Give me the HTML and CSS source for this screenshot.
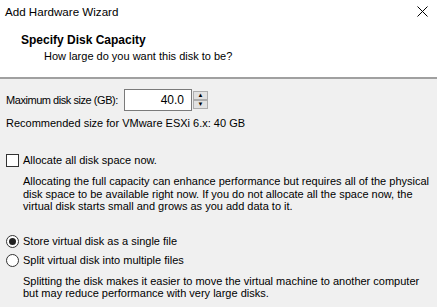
FILE: index.html
```html
<!DOCTYPE html>
<html lang="en">
<head>
    <meta charset="UTF-8">
    <title>Add Hardware Wizard</title>
    <link rel="stylesheet" href="styles.css">
</head>
<body>

<div class="titlebar">
    <span class="title">Add Hardware Wizard</span>
    <svg class="close" width="11" height="11" viewBox="0 0 11 11">
        <path d="M0.5 0.5 L10.5 10.5 M10.5 0.5 L0.5 10.5" stroke="#000" stroke-width="1" fill="none"/>
    </svg>
</div>

<div class="header">
    <div class="heading">Specify Disk Capacity</div>
    <div class="subheading">How large do you want this disk to be?</div>
</div>

<div class="content">
    <div class="size-row">
        <label>Maximum disk size (GB):</label>
        <div class="spin">
            <div class="spin-value">40.0</div>
            <div class="spin-buttons">
                <div class="spin-btn">&#x25B2;</div>
                <div class="spin-btn">&#x25BC;</div>
            </div>
        </div>
    </div>
    <div class="recommend">Recommended size for VMware ESXi 6.x: 40 GB</div>

    <div class="option check-option">
        <span class="checkbox"></span>
        <span>Allocate all disk space now.</span>
    </div>
    <div class="desc">
        Allocating the full capacity can enhance performance but requires all of the physical
        disk space to be available right now. If you do not allocate all the space now, the
        virtual disk starts small and grows as you add data to it.
    </div>

    <div class="option radio-first">
        <span class="radio checked"></span>
        <span>Store virtual disk as a single file</span>
    </div>
    <div class="option">
        <span class="radio"></span>
        <span>Split virtual disk into multiple files</span>
    </div>
    <div class="desc">
        Splitting the disk makes it easier to move the virtual machine to another computer<br>
        but may reduce performance with very large disks.
    </div>
</div>

</body>
</html>
```

FILE: styles.css
```css
body {
  margin: 0;
  width: 437px;
  height: 307px;
  overflow: hidden;
  background: #f0f0f0;
  font-family: "Liberation Sans", Arial, sans-serif;
  font-size: 11px;
  color: #000;
}
.titlebar {
  background: #fff;
  height: 23px;
  display: flex;
  align-items: center;
  justify-content: space-between;
  padding: 0 9px 0 5px;
}
.title {
  font-size: 11.6px;
}
.close {
  display: block;
}
.header {
  background: #fff;
  height: 56px;
  border-bottom: 2px solid #a0a0a0;
  box-sizing: border-box;
  padding-top: 10px;
}
.heading {
  font-weight: bold;
  font-size: 12px;
  padding-left: 21px;
  line-height: 15px;
}
.subheading {
  padding-left: 44px;
  line-height: 16px;
}
.content {
  padding: 10px 6px 0 6px;
}
.size-row {
  display: flex;
  align-items: center;
}
.size-row label {
  width: 118px;
  flex-shrink: 0;
  white-space: nowrap;
  letter-spacing: -0.45px;
}
.spin {
  display: flex;
  align-items: center;
}
.spin-value {
  width: 59px;
  height: 20px;
  border: 1px solid #7a7a7a;
  background: #fff;
  text-align: right;
  line-height: 20px;
  padding-right: 7px;
  font-size: 12px;
}
.spin-buttons {
  display: flex;
  flex-direction: column;
  margin-left: 1px;
}
.spin-btn {
  width: 13px;
  height: 7px;
  border: 1px solid #adadad;
  background: #e1e1e1;
  font-size: 6px;
  line-height: 7px;
  text-align: center;
}
.recommend {
  margin-top: 6px;
  line-height: 13px;
}
.option {
  display: flex;
  align-items: center;
  line-height: 13px;
  height: 19px;
}
.check-option {
  margin-top: 21px;
}
.checkbox {
  width: 11px;
  height: 11px;
  border: 1px solid #333;
  background: #fff;
  margin-right: 4px;
}
.desc {
  padding-left: 17px;
  margin-top: 5px;
  line-height: 12.5px;
  width: 410px;
}
.radio-first {
  margin-top: 19px;
}
.radio {
  width: 11px;
  height: 11px;
  border: 1px solid #333;
  border-radius: 50%;
  background: #fff;
  margin-right: 4px;
  position: relative;
}
.radio.checked::after {
  content: "";
  position: absolute;
  left: 2px;
  top: 2px;
  width: 7px;
  height: 7px;
  border-radius: 50%;
  background: #222;
}
```
